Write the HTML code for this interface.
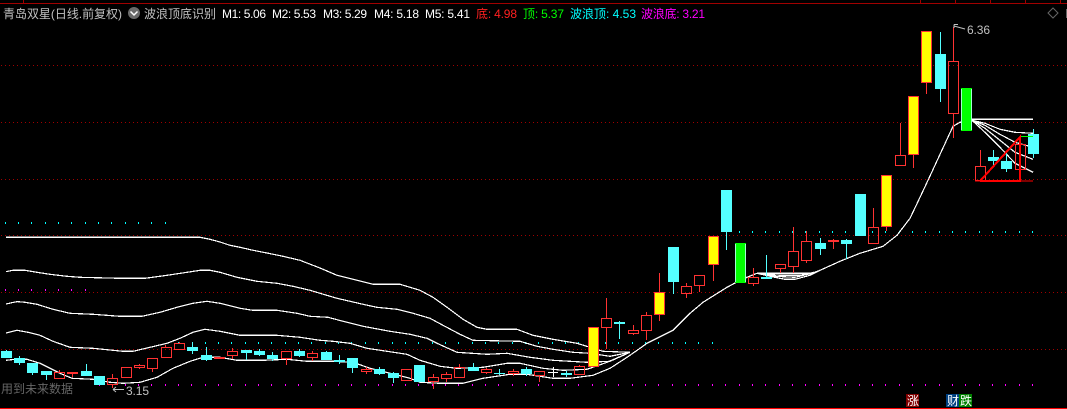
<!DOCTYPE html>
<html><head><meta charset="utf-8"><style>
html,body{margin:0;padding:0;background:#000;width:1067px;height:409px;overflow:hidden}
svg{display:block}
text{font-family:"Liberation Sans","WenQuanYi Zen Hei","Noto Sans CJK SC",sans-serif;font-size:12px}
.l{fill:none;stroke:#fff;stroke-width:1.2}
</style></head><body>
<svg width="1067" height="409" viewBox="0 0 1067 409" xmlns="http://www.w3.org/2000/svg">
<defs><pattern id="d" patternUnits="userSpaceOnUse" x="0" y="0" width="4" height="409"><rect x="1" y="0" width="1" height="409" fill="#a00000"/></pattern></defs>
<rect width="1067" height="409" fill="#000"/>
<g shape-rendering="crispEdges">
<rect x="0" y="3" width="1067" height="1" fill="#a00000"/>
<path d="M23.5 0V3M920.5 0V3M955.5 0V3M990.5 0V3M1025.5 0V3M1060.5 0V3" stroke="#a00000"/>
<rect x="0" y="408" width="1067" height="1" fill="#f00"/>
<rect x="0" y="65" width="1067" height="1" fill="url(#d)"/>
<rect x="0" y="122" width="1067" height="1" fill="url(#d)"/>
<rect x="0" y="179" width="1067" height="1" fill="url(#d)"/>
<rect x="0" y="235" width="1067" height="1" fill="url(#d)"/>
<rect x="0" y="292" width="1067" height="1" fill="url(#d)"/>
<rect x="0" y="349" width="1067" height="1" fill="url(#d)"/>
<path stroke="#00ffff" d="M5.5 222v2M18.5 222v2M31.5 222v2M45.5 222v2M58.5 222v2M71.5 222v2M85.5 222v2M98.5 222v2M111.5 222v2M125.5 222v2M138.5 222v2M151.5 222v2M165.5 222v2
M178.5 342v2M192.5 342v2M205.5 342v2M218.5 342v2M231.5 342v2M245.5 342v2M258.5 342v2M271.5 342v2M285.5 342v2M298.5 342v2M311.5 342v2M325.5 342v2M338.5 342v2M351.5 342v2M365.5 342v2M378.5 342v2M392.5 342v2M405.5 342v2M418.5 342v2M432.5 342v2M445.5 342v2M458.5 342v2M472.5 342v2M485.5 342v2M498.5 342v2M512.5 342v2M525.5 342v2M538.5 342v2M552.5 342v2M565.5 342v2M578.5 342v2M592.5 342v2M605.5 342v2M618.5 342v2M632.5 342v2M645.5 342v2M658.5 342v2M672.5 342v2M685.5 342v2M698.5 342v2M712.5 342v2
M739.5 231v2M752.5 231v2M765.5 231v2M779.5 231v2M792.5 231v2M805.5 231v2M819.5 231v2M832.5 231v2M845.5 231v2M859.5 231v2M872.5 231v2M885.5 231v2M899.5 231v2M912.5 231v2M925.5 231v2M939.5 231v2M952.5 231v2M965.5 231v2M979.5 231v2M992.5 231v2M1005.5 231v2M1019.5 231v2M1032.5 231v2"/>
<path stroke="#ff00ff" d="M5.5 289v2M18.5 289v2M31.5 289v2M45.5 289v2M58.5 289v2M71.5 289v2M85.5 289v2
M99.5 384v2M112.5 384v2M125.5 384v2M138.5 384v2M151.5 384v2M165.5 384v2M178.5 384v2M191.5 384v2M205.5 384v2M218.5 384v2M231.5 384v2M245.5 384v2M258.5 384v2M271.5 384v2M285.5 384v2M298.5 384v2M311.5 384v2M325.5 384v2M338.5 384v2M351.5 384v2M365.5 384v2M378.5 384v2M392.5 384v2M405.5 384v2M418.5 384v2M432.5 384v2M445.5 384v2M458.5 384v2M472.5 384v2M485.5 384v2M498.5 384v2M512.5 384v2M525.5 384v2M538.5 384v2M552.5 384v2M565.5 384v2M578.5 384v2M592.5 384v2M605.5 384v2M618.5 384v2M632.5 384v2M645.5 384v2M658.5 384v2M672.5 384v2M685.5 384v2M698.5 384v2M712.5 384v2M725.5 384v2M739.5 384v2M752.5 384v2M765.5 384v2M779.5 384v2M792.5 384v2M805.5 384v2M819.5 384v2M832.5 384v2M845.5 384v2M859.5 384v2M872.5 384v2M885.5 384v2M899.5 384v2M912.5 384v2M925.5 384v2M939.5 384v2M952.5 384v2M965.5 384v2M979.5 384v2M992.5 384v2M1005.5 384v2M1019.5 384v2M1032.5 384v2"/>
</g>
<g shape-rendering="crispEdges">
<g transform="translate(0,0.3)">
<path class="l" d="M6 237L200 237L210 239L220 241.7L230 245L240 247L253 250L267 252.7L283 256L300 260L320 267.7L337 275L353 279L373 284L400 284L420 290L433 297L447 307L463 319L477 327L487 329L517 329L533 335L553 339L577 343L590 347L603 351L630 352"/>
<path class="l" d="M6 271.3L13 270L25 270L37 272L50 274L67 276L80 277L120 278L145 278L167 275L187 272L200 270L210 270L220 272L237 277L257 281L277 283L293 286L310 290L320 293L337 298L363 304L377 307L397 309L413 313L430 318L443 325L460 334L473 340L520 341L537 346L553 349L573 352L590 353L610 356L630 352"/>
<path class="l" d="M6 303.7L17 301.3L25 302L37 304L53 309L70 313L93 314L120 316L142 316L160 312L177 307L193 303L207 301L220 303L240 308L253 310L277 310L297 313L310 316L328 317L343 321L363 326L390 331L410 334L427 338L437 343L457 352L487 354L507 353L530 357L553 360L587 362L610 361L630 352"/>
<path class="l" d="M6 332.7L17 330L28 332L40 335L53 341L70 347L93 348L113 350L123 351L133 351L150 347L167 343L180 338L193 332L205 329L220 331L240 335L277 335L300 337L320 340L333 341L350 343L367 348L387 351L407 354L420 360L440 366L457 368L483 367L507 363L520 363L543 368L563 370L587 369L607 362L630 352"/>
<path class="l" d="M6 360L15 359L27 359L40 363L60 373L72 378L93 379L110 382L123 383L140 382L157 377L173 368L190 361L203 357L220 357L237 360L263 360L287 359L307 361L333 361L353 362L370 368L390 373L410 378L420 382L440 383L463 383L483 378L510 374L527 374L553 378L570 378L593 375L610 368L627 357L640 348L647 343L673 330L690 313L703 302L727 287L740 280L747 277L757 273"/>
<path class="l" d="M757 273L814 273L820 270L840 261L860 253L883 246L897 235L910 218L920 197L928 180L953 126L960 122L972 120"/>
<path class="l" d="M757 273L770 276L785 279L795 279L810 275L820 270M757 273L775 276L795 277L812 273L820 270M757 273L780 275L800 275L814 272"/>
<path class="l" d="M972 119H1033M972 120L985 123L1000 129L1015 132L1033 133M972 120L985 125L1000 134L1015 142L1033 147M972 120L985 128L1000 140L1015 152L1033 159M972 120L985 132L1000 147L1015 163L1033 172"/>
</g>
<path stroke="#ff3232" fill="none" d="M59.500 370V372M72.500 374V377M112.500 374V378M112.500 385V388M139.500 364V365M139.500 368V369M152.500 369V372M165.500 345V347M179.500 342V343M232.500 348V351M232.500 356V359M286.500 359V365M312.500 351V353M312.500 358V361M366.500 367V369M366.500 372V374M433.500 374V377M433.500 382V389M446.500 372V374M446.500 379V382M459.500 364V367M486.500 368V369M486.500 373V374M513.500 369V371M513.500 374V376M539.500 376V382M579.500 365V366M606.500 298V318M606.500 328V349M633.500 325V330M633.500 334V335M646.500 312V315M646.500 331V340M659.500 273V292M659.500 315V321M686.500 283V286M686.500 294V298M699.500 285V292M713.500 265V281M753.500 268V277M753.500 284V286M780.500 269V273M793.500 227V251M793.500 267V273M806.500 231V241M806.500 261V263M833.500 239V249M873.500 208V227M886.500 227V231M900.500 123V155M913.500 155V168M926.500 83V94M953.500 27V61M953.500 114V138M980.500 150V166"/>
<path stroke="#54ffff" fill="none" d="M6.500 350V351M19.500 356V365M32.500 373V375M46.500 375V380M86.500 364V371M192.500 342V354M206.500 347V361M246.500 353V360M259.500 349V356M272.500 352V361M299.500 349V357M326.500 351V352M339.500 355V364M352.500 368V373M379.500 367V375M393.500 372V383M473.500 363V367M499.500 369V375M526.500 367V376M566.500 371V377M619.500 321V339M673.500 282V294M726.500 232V250M766.500 255V279M820.500 238V255M846.500 239V259M940.500 32V102M993.500 150V165M1006.500 153V172M1033.500 129V158"/>
<path fill="#54ffff" d="M1 351h11V358h-11zM14 358h11V363h-11zM27 363h11V373h-11zM41 371h11V375h-11zM81 371h11V376h-11zM94 376h11V385h-11zM187 347h11V351h-11zM201 355h11V360h-11zM241 350h11V353h-11zM254 351h11V355h-11zM267 355h11V359h-11zM294 351h11V356h-11zM321 352h11V360h-11zM334 360h11V362h-11zM347 358h11V368h-11zM374 369h11V374h-11zM388 373h11V378h-11zM414 365h11V382h-11zM468 367h11V371h-11zM494 373h11V374h-11zM521 369h11V374h-11zM561 373h11V375h-11zM614 322h11V324h-11zM668 247h11V282h-11zM721 190h11V232h-11zM761 277h11V279h-11zM815 243h11V249h-11zM841 240h11V244h-11zM855 194h11V236h-11zM935 54h11V89h-11zM988 157h11V161h-11zM1001 161h11V169h-11zM1028 134h11V154h-11z"/>
<path fill="#ff3232" d="M67 372h11V374h-11zM214 357h11V359h-11zM828 240h11V242h-11z"/>
<path fill="none" stroke="#ff3232" d="M54.500 372.500h10V378.500h-10zM107.500 378.500h10V384.500h-10zM121.500 367.500h10V377.500h-10zM134.500 365.500h10V367.500h-10zM147.500 358.500h10V368.500h-10zM161.500 347.500h10V357.500h-10zM174.500 343.500h10V349.500h-10zM227.500 351.500h10V355.500h-10zM281.500 351.500h10V358.500h-10zM307.500 353.500h10V357.500h-10zM361.500 369.500h10V371.500h-10zM401.500 369.500h10V380.500h-10zM428.500 377.500h10V381.500h-10zM441.500 374.500h10V378.500h-10zM454.500 367.500h10V377.500h-10zM481.500 369.500h10V372.500h-10zM508.500 371.500h10V373.500h-10zM534.500 371.500h10V375.500h-10zM574.500 366.500h10V374.500h-10zM601.500 318.500h10V327.500h-10zM628.500 330.500h10V333.500h-10zM641.500 315.500h10V330.500h-10zM681.500 286.500h10V293.500h-10zM694.500 275.500h10V285.500h-10zM748.500 277.500h10V283.500h-10zM775.500 264.500h10V268.500h-10zM788.500 251.500h10V266.500h-10zM801.500 241.500h10V260.500h-10zM868.500 227.500h10V243.500h-10zM895.500 155.500h10V165.500h-10zM948.500 61.500h10V113.500h-10zM975.500 166.500h10V180.500h-10zM1015.500 144.500h10V169.500h-10z"/>
<path fill="#ffff00" stroke="#ff3232" d="M588.500 327.500h10V366.500h-10zM654.500 292.500h10V314.500h-10zM708.500 236.500h10V264.500h-10zM881.500 175.500h10V226.500h-10zM908.500 96.500h10V154.500h-10zM921.500 31.500h10V82.500h-10z"/>
<path fill="#00ff00" d="M735 243h11V283h-11zM961 88h11V131h-11z"/>
<path stroke="#a0ffd0" fill="none" d="M735.500 244V282M745.500 244V282M961.500 89V130M971.500 89V130"/>
<path stroke="#fff" fill="none" d="M548 372.500H558M553.500 367V377"/>
<path stroke="#00ff00" fill="none" d="M1021 136.500H1033"/>
<path fill="none" stroke="#f00" d="M975 181H1033"/>
<path fill="none" stroke="#f00" stroke-width="2" d="M980 181L1020 137V181H980"/>
</g>
<g>
<text x="3" y="18" fill="#c0c0c0" textLength="119" lengthAdjust="spacing">青岛双星(日线.前复权)</text>
<circle cx="134" cy="13" r="6" fill="#6a6a6a"/>
<path d="M130.500 11.500L134 15L137.500 11.500" fill="none" stroke="#fff" stroke-width="1.500"/>
<text x="144" y="18" fill="#c0c0c0" textLength="72" lengthAdjust="spacing">波浪顶底识别</text>
<text x="222" y="18" fill="#fff" textLength="44" lengthAdjust="spacing">M1: 5.06</text>
<text x="272" y="18" fill="#fff" textLength="44" lengthAdjust="spacing">M2: 5.53</text>
<text x="323" y="18" fill="#fff" textLength="44" lengthAdjust="spacing">M3: 5.29</text>
<text x="374" y="18" fill="#fff" textLength="45" lengthAdjust="spacing">M4: 5.18</text>
<text x="425" y="18" fill="#fff" textLength="45" lengthAdjust="spacing">M5: 5.41</text>
<text x="476" y="18" fill="#ff2020" textLength="41" lengthAdjust="spacing">底: 4.98</text>
<text x="523" y="18" fill="#00ff00" textLength="41" lengthAdjust="spacing">顶: 5.37</text>
<text x="570" y="18" fill="#00ffff" textLength="66" lengthAdjust="spacing">波浪顶: 4.53</text>
<text x="641" y="18" fill="#ff00ff" textLength="64" lengthAdjust="spacing">波浪底: 3.21</text>
<path d="M1053 8L1058 13L1053 18L1048 13Z" fill="none" stroke="#666"/>
<rect x="1066" y="9" width="1" height="9" fill="#666"/>
<path d="M954 26L965 29M954 24.500H958M954 24.500V28" fill="none" stroke="#c0c0c0"/>
<text x="967" y="34" fill="#c0c0c0" textLength="23" lengthAdjust="spacing">6.36</text>
<path d="M113 389.500H124M113 389.500L116 387M113 389.500L116 392" fill="none" stroke="#c0c0c0"/>
<text x="126" y="395" fill="#c0c0c0" textLength="23" lengthAdjust="spacing">3.15</text>
<text x="1" y="393" fill="#666" textLength="72" lengthAdjust="spacing">用到未来数据</text>
<rect x="906" y="394" width="13" height="13" fill="#800000"/>
<text x="907" y="405" fill="#fff">涨</text>
<rect x="946" y="394" width="13" height="13" fill="#004080"/>
<text x="947" y="405" fill="#fff">财</text>
<rect x="959" y="394" width="13" height="13" fill="#008000"/>
<text x="960" y="405" fill="#fff">跌</text>
</g>
</svg>
</body></html>
